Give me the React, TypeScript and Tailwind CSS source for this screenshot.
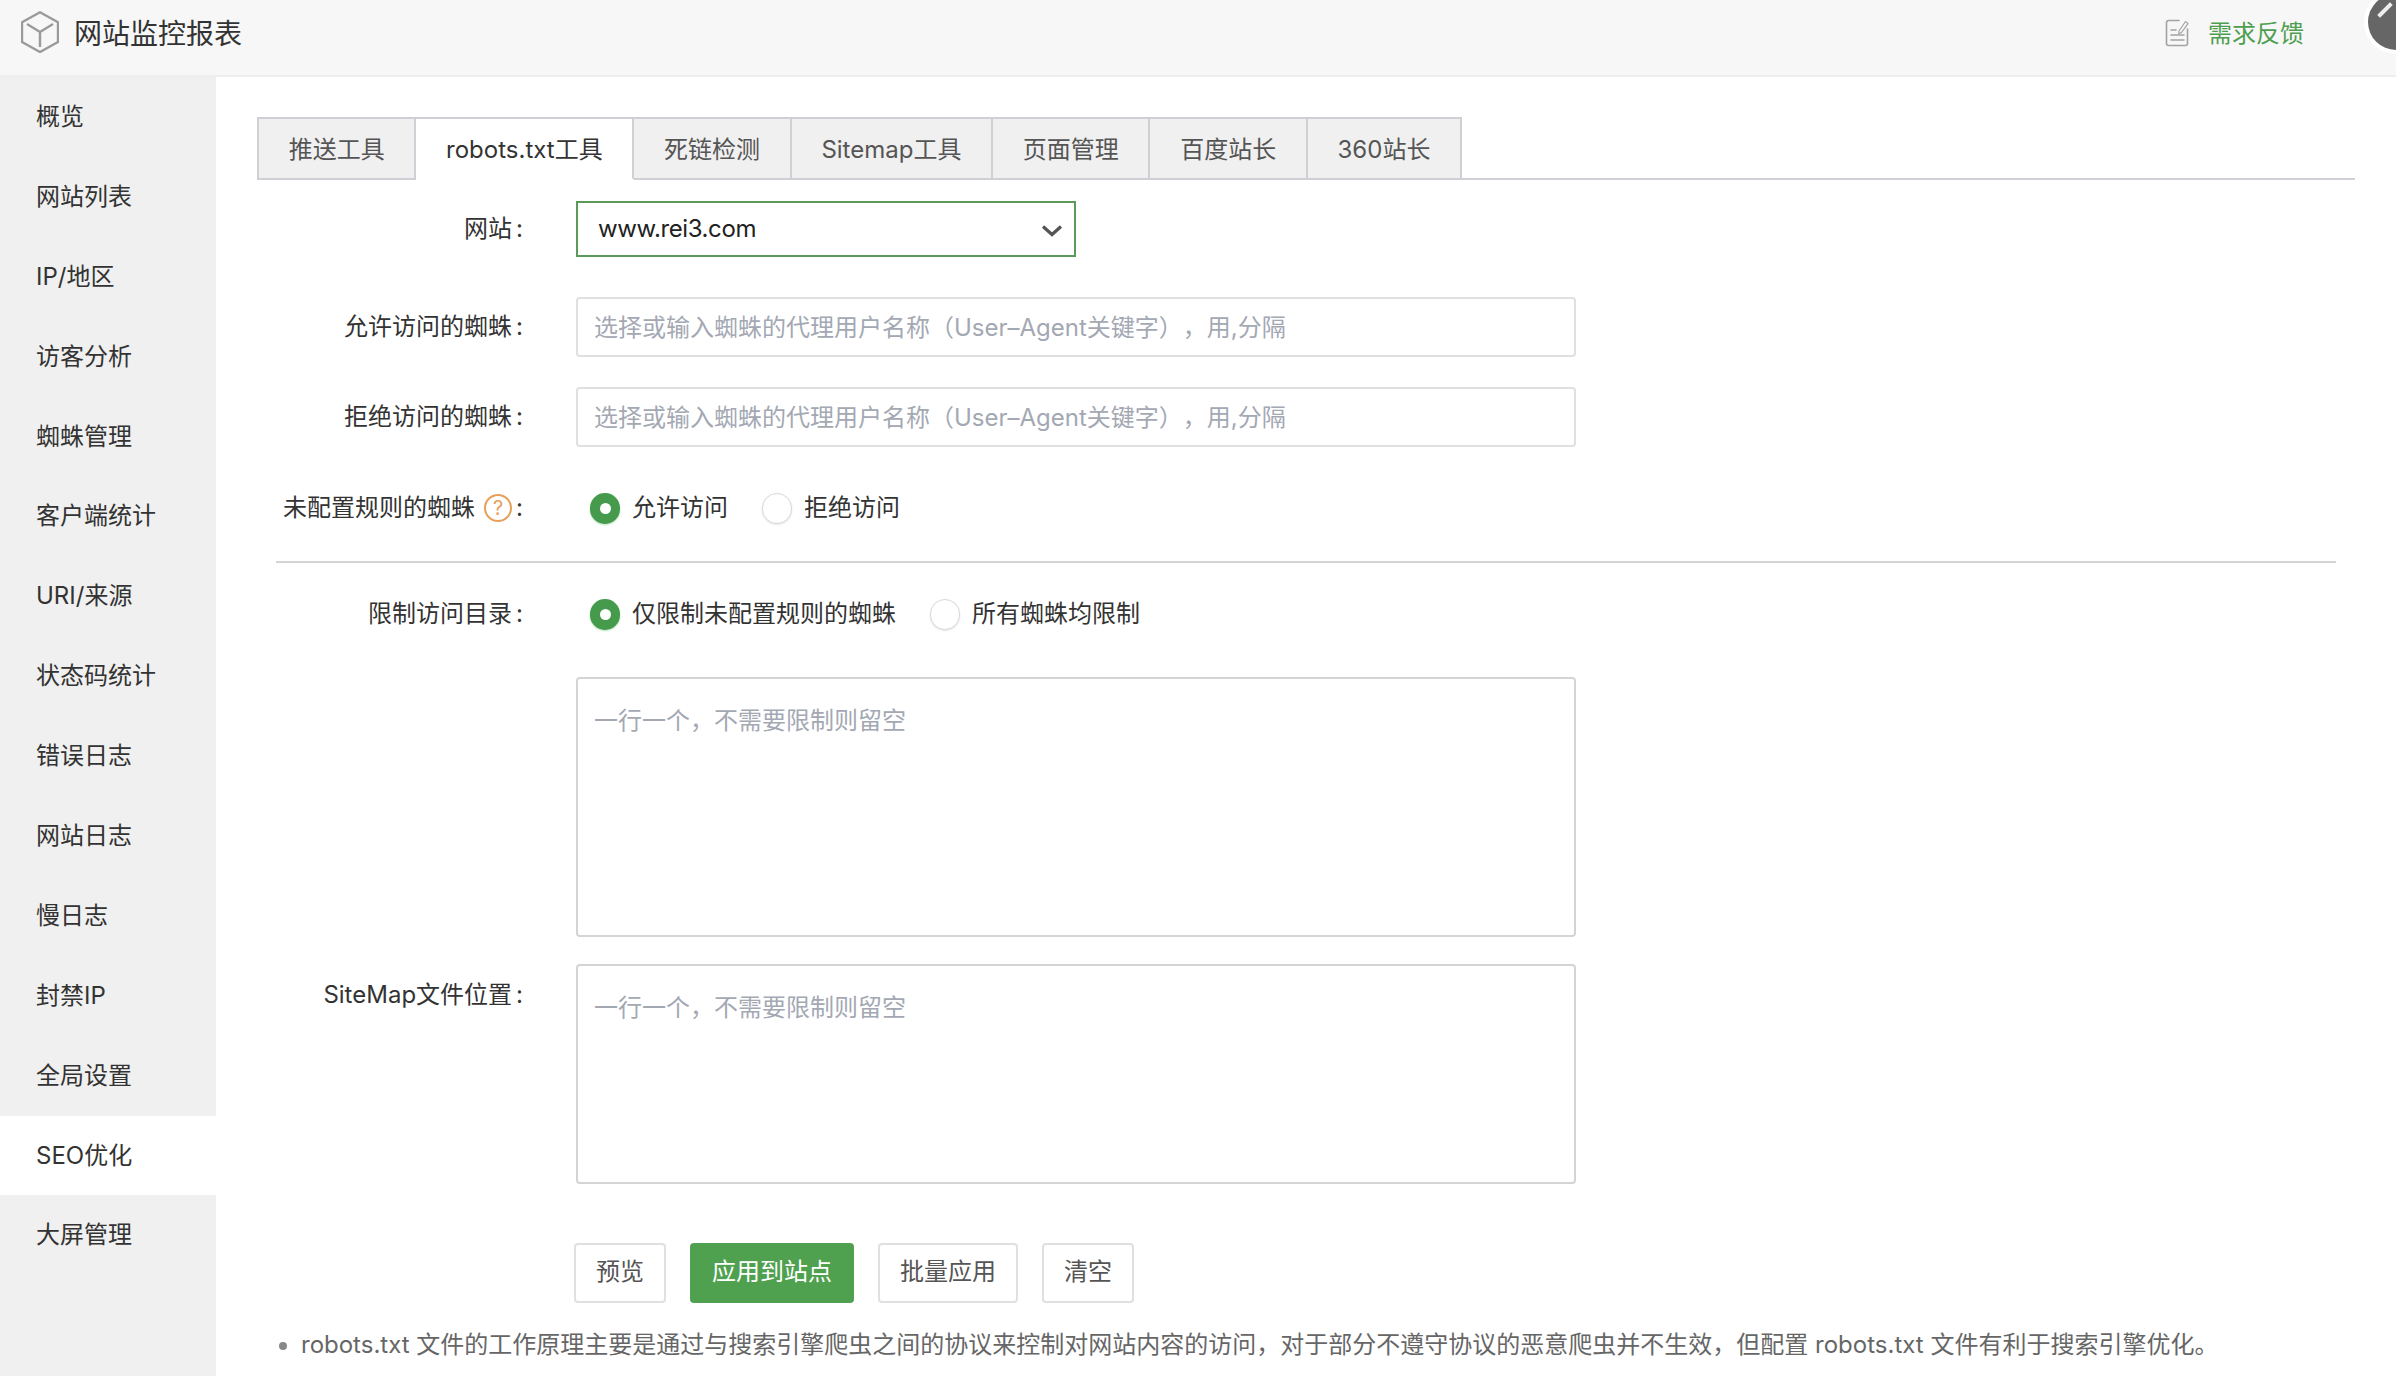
const menu = ["概览", "网站列表", "IP/地区", "访客分析", "蜘蛛管理", "客户端统计", "URI/来源", "状态码统计", "错误日志", "网站日志", "慢日志", "封禁IP", "全局设置", "SEO优化", "大屏管理"];
const tabs = ["推送工具", "robots.txt工具", "死链检测", "Sitemap工具", "页面管理", "百度站长", "360站长"];
const agentHint = "选择或输入蜘蛛的代理用户名称（User–Agent关键字），用,分隔";
const lineHint = "一行一个，不需要限制则留空";

function Radio({ label, checked }: { label: string; checked?: boolean }) {
  return (
    <label className="flex items-center mr-[34px]">
      {checked ? (
        <span className="w-[30px] h-[31px] rounded-full bg-[#459a4c] flex items-center justify-center shadow-[0_1px_2px_#b7e0b9]">
          <span className="w-[11px] h-[11px] rounded-full bg-white" />
        </span>
      ) : (
        <span className="w-[30px] h-[31px] rounded-full bg-white border border-[#d9d9d9] shadow-[0_1px_2px_#e5e5e5]" />
      )}
      <span className="ml-[12px] text-[#333]">{label}</span>
    </label>
  );
}

function Label({ children }: { children: React.ReactNode }) {
  return <div className="w-[319px] shrink-0 pr-[53px] flex justify-end items-center text-[#333]">{children}<span className="ml-1">:</span></div>;
}

function Btn({ children }: { children: string }) {
  return <button className="h-[60px] px-[20px] pb-[2px] rounded-[4px] border-2 border-[#e0e0e0] bg-white text-[#555]">{children}</button>;
}

export default function App() {
  return (
    <div className="relative h-screen overflow-hidden flex flex-col bg-white text-[24px] leading-[34px] [text-spacing-trim:space-all] font-['Inter','Noto_Sans_CJK_SC',sans-serif]">
      <header className="h-[77px] shrink-0 flex items-center bg-[#f7f7f7] border-b-2 border-[#eeeeee] pb-[8px] pl-[21px] pr-[92px]">
        <svg className="-mt-[4px]" width="38" height="42" viewBox="0 0 38 42" fill="none" stroke="#9a9a9a" strokeWidth="2.4" strokeLinejoin="round">
          <path d="M19 1.2 37 11.2V31L19 41 1 31V11.2Z" />
          <path d="M6 13 19 21 32 13M19 21V36" />
        </svg>
        <div className="ml-[15px] text-[28px] text-[#333]">网站监控报表</div>
        <div className="ml-auto flex items-center text-[#4e9e50]">
          <svg className="-mt-[2px]" width="24" height="28" viewBox="0 0 24 28" fill="none" stroke="#a3a3a3" strokeWidth="1.6" strokeLinecap="round">
            <path d="M14 1.5H3.5A2 2 0 0 0 1.5 3.5V24.500A2 2 0 0 0 3.500 26.500H20.500A2 2 0 0 0 22.500 24.500V10" />
            <path d="M6 11H11M6 16H19M6 21H19" />
            <path d="M14 12 20.500 2.500 23 4.500 16.500 13.500 13.800 14.500Z" strokeWidth="1.200" />
          </svg>
          <span className="ml-[19px]">需求反馈</span>
        </div>
      </header>

      <div className="absolute right-[-28px] top-[-6px] w-[56px] h-[56px] rounded-full bg-[#666] shadow-[0_0_0_4px_#ffffff] overflow-hidden">
        <div className="absolute left-[8px] top-[14px] w-[18px] h-[4px] bg-[#eee] -rotate-45" />
      </div>

      <div className="flex flex-1 min-h-0">
        <aside className="w-[216px] shrink-0 bg-[#f0f0f0] text-[#333]">
          {menu.map((m) => (
            <div key={m} className={"h-[79.9px] flex items-center pl-[36px] " + (m === "SEO优化" ? "bg-white" : "")}>{m}</div>
          ))}
        </aside>

        <main className="flex-1 pl-[41px] pr-[41px] pt-[40px]">
          <div className="flex h-[63px] border-b-2 border-[#cfcfd6]">
            {tabs.map((t, i) => (
              <div
                key={t}
                className={
                  "h-[63px] px-[29.7px] pt-[3px] flex items-center border-t-2 border-r-2 border-[#cfcfd6] " +
                  (i === 0 ? "border-l-2 " : "") +
                  (i === 1 ? "bg-white text-[#333] border-b-2 border-b-white" : "bg-[#f0f0f0] text-[#555] border-b-2")
                }
              >
                {t}
              </div>
            ))}
          </div>

          <div className="flex mt-[21px]">
            <Label>网站</Label>
            <div className="relative w-[500px]">
              <select className="w-[500px] h-[56px] border-2 border-[#5b9a5b] pl-[20px] text-[#222] tracking-[-0.4px] appearance-none bg-white">
                <option>www.rei3.com</option>
              </select>
              <svg className="absolute right-[12px] top-[23px]" width="24" height="15" viewBox="0 0 24 15" fill="none" stroke="#555" strokeWidth="3.2">
                <path d="M3 2.500 12 10.500 21 2.500" />
              </svg>
            </div>
          </div>

          <div className="flex mt-[40px]">
            <Label>允许访问的蜘蛛</Label>
            <input className="w-[1000px] h-[60px] border-2 border-[#e0e0e0] rounded-[4px] px-[16px] placeholder:text-[#a3a8b3]" placeholder={agentHint} />
          </div>
          <div className="flex mt-[30px]">
            <Label>拒绝访问的蜘蛛</Label>
            <input className="w-[1000px] h-[60px] border-2 border-[#e0e0e0] rounded-[4px] px-[16px] placeholder:text-[#a3a8b3]" placeholder={agentHint} />
          </div>

          <div className="flex items-center mt-[44px] h-[34px]">
            <Label>
              未配置规则的蜘蛛
              <span className="ml-[9px] w-[28px] h-[28px] rounded-full border-2 border-[#e6a05a] flex items-center justify-center text-[20px] leading-none text-[#e6a05a]">?</span>
            </Label>
            <div className="ml-[14px] flex">
              <Radio label="允许访问" checked />
              <Radio label="拒绝访问" />
            </div>
          </div>

          <div className="mt-[36px] ml-[19px] mr-[19px] border-t-2 border-[#d4d4d4]" />

          <div className="flex items-center mt-[34px] h-[34px]">
            <Label>限制访问目录</Label>
            <div className="ml-[14px] flex">
              <Radio label="仅限制未配置规则的蜘蛛" checked />
              <Radio label="所有蜘蛛均限制" />
            </div>
          </div>

          <div className="flex mt-[46px]">
            <div className="w-[319px] shrink-0" />
            <textarea className="w-[1000px] h-[260px] border-2 border-[#d4d4d4] rounded-[4px] px-[16px] pt-[25px] resize-none placeholder:text-[#a3a8b3]" placeholder={lineHint} />
          </div>

          <div className="flex mt-[27px]">
            <div className="w-[319px] shrink-0 pr-[53px] pt-[14px] flex justify-end text-[#333] h-[48px]">SiteMap文件位置<span className="ml-1">:</span></div>
            <textarea className="w-[1000px] h-[220px] border-2 border-[#d4d4d4] rounded-[4px] px-[16px] pt-[25px] resize-none placeholder:text-[#a3a8b3]" placeholder={lineHint} />
          </div>

          <div className="flex mt-[59px] ml-[317px] gap-[24px]">
            <Btn>预览</Btn>
            <button className="h-[60px] px-[22px] pb-[2px] rounded-[4px] bg-[#50a14f] text-white">应用到站点</button>
            <Btn>批量应用</Btn>
            <Btn>清空</Btn>
          </div>

          <ul className="mt-[25px] pl-[44px] list-disc text-[#666] marker:text-[#888]">
            <li>robots.txt 文件的工作原理主要是通过与搜索引擎爬虫之间的协议来控制对网站内容的访问，对于部分不遵守协议的恶意爬虫并不生效，但配置 robots.txt 文件有利于搜索引擎优化。</li>
          </ul>
        </main>
      </div>
    </div>
  );
}
